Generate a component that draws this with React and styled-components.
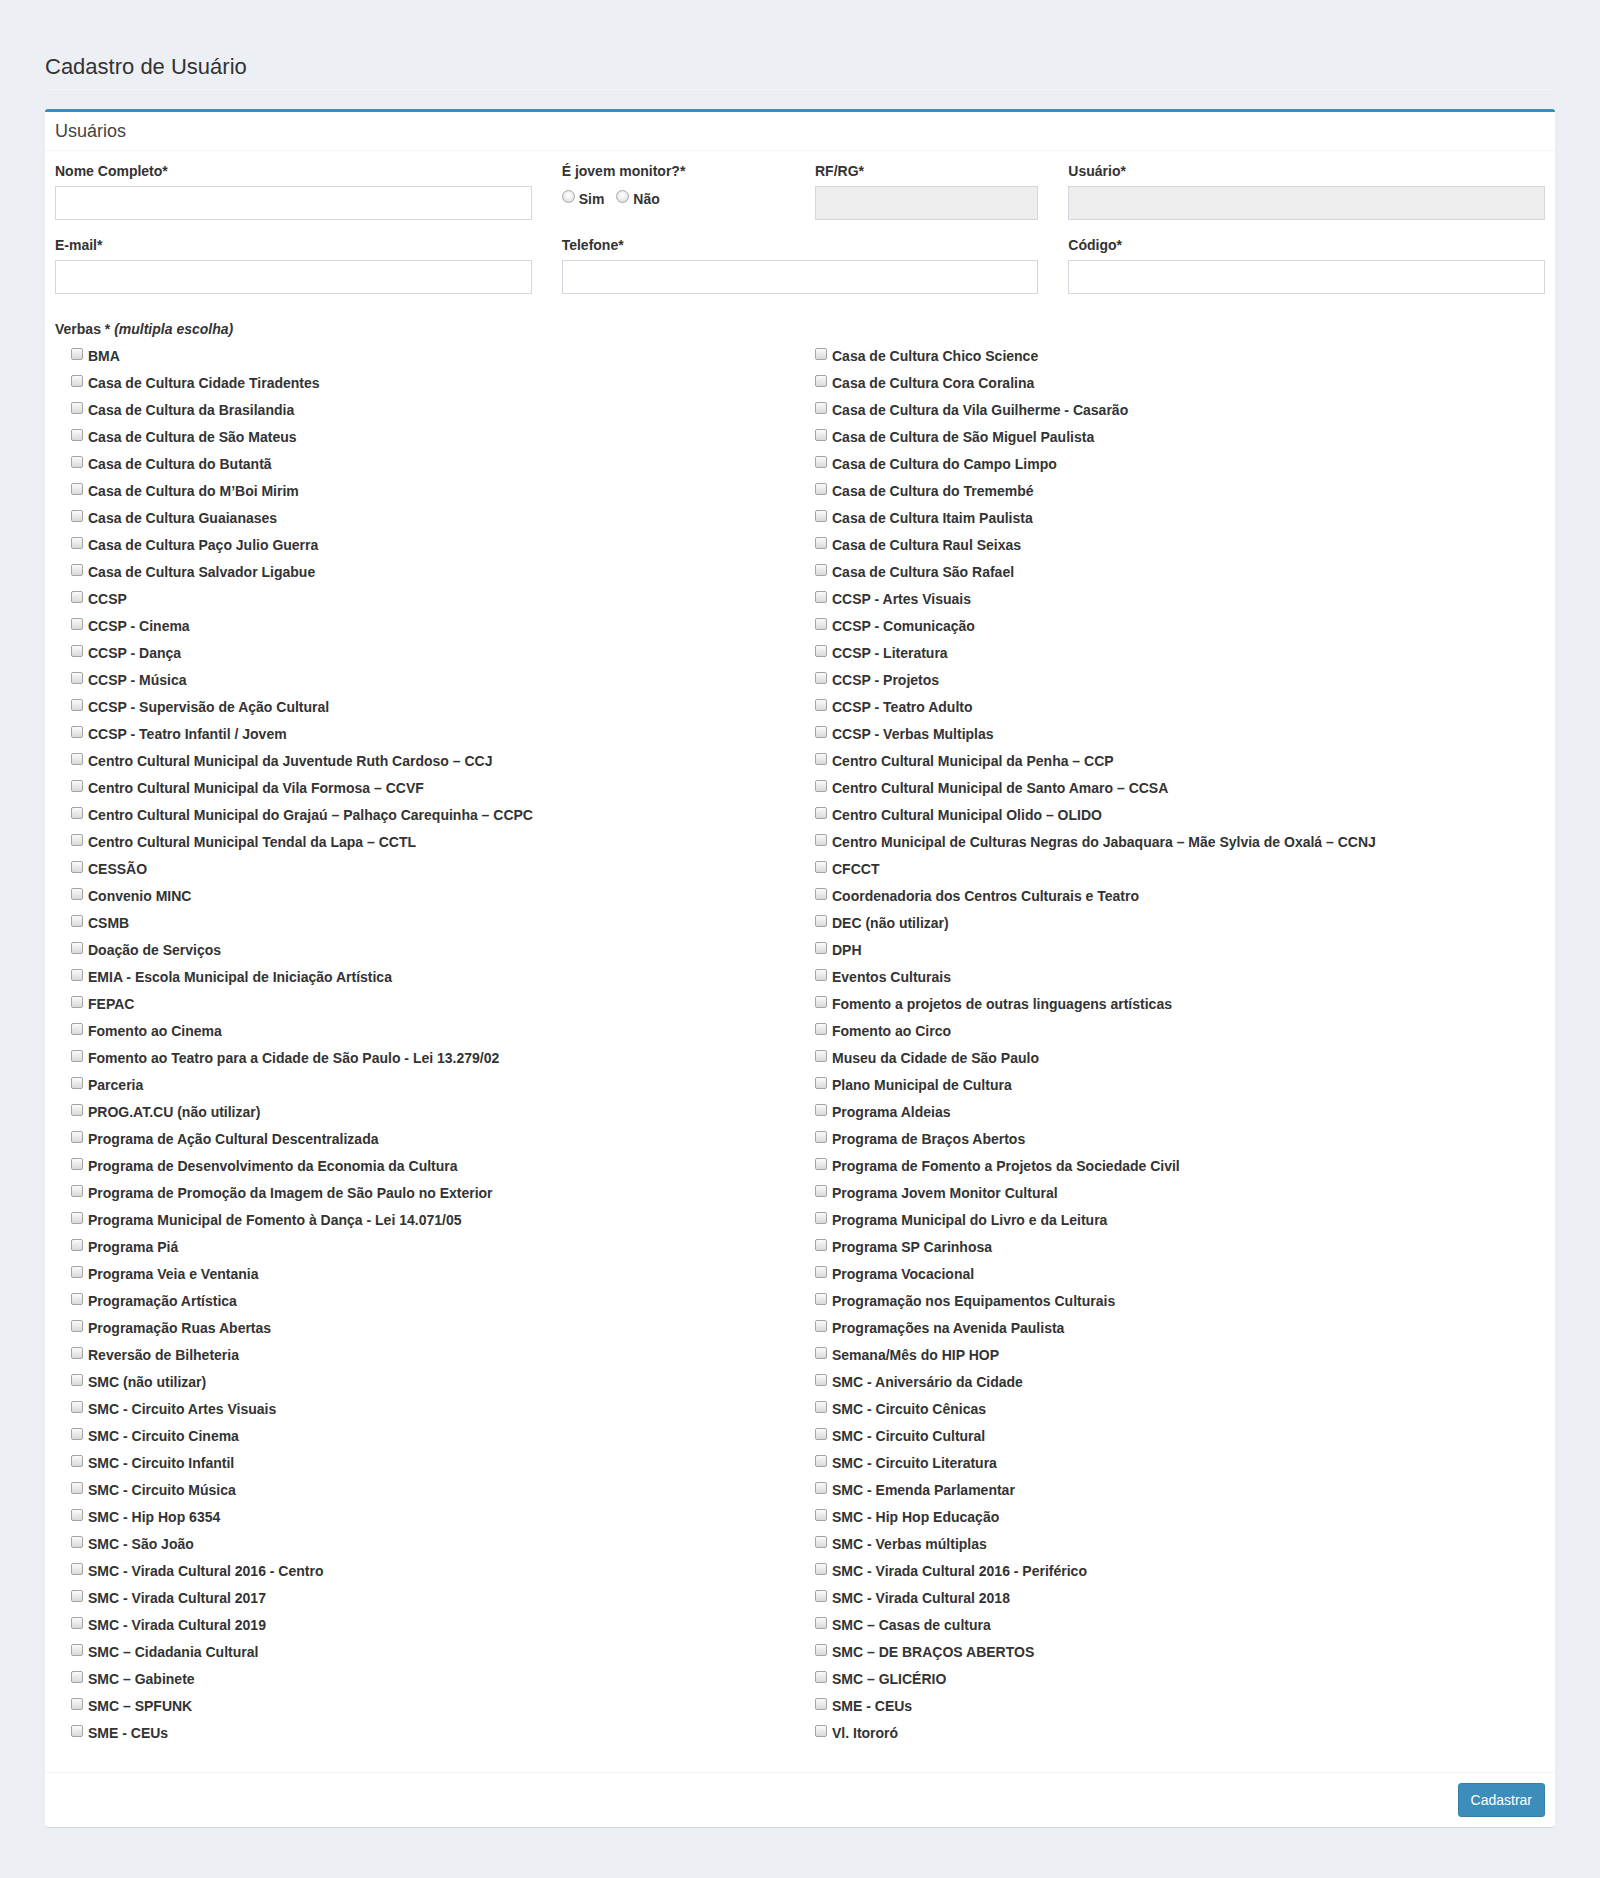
import React from "react";
import styled, { createGlobalStyle } from "styled-components";

const GlobalStyle = createGlobalStyle`
  html, body { margin: 0; padding: 0; }
  body {
    background: #ecf0f5;
    font-family: "Liberation Sans", Arial, Helvetica, sans-serif;
    font-size: 14px;
    line-height: 20px;
    color: #333;
  }
  * { box-sizing: border-box; }
`;

const Page = styled.div`
  padding: 55px 45px 50px;
  min-height: 1878px;
`;

const PageHeader = styled.div`
  padding-bottom: 10px;
  border-bottom: 1px solid #f3f5f8;
  margin-bottom: 19px;
`;

const Title = styled.h1`
  margin: 0;
  font-size: 22px;
  line-height: 24px;
  font-weight: 400;
  color: #333;
`;

const Box = styled.div`
  background: #fff;
  border-top: 3px solid #3c8dbc;
  border-radius: 3px;
  box-shadow: 0 1px 1px rgba(0, 0, 0, 0.1);
`;

const BoxHeader = styled.div`
  padding: 10px;
  border-bottom: 1px solid #f4f4f4;
`;

const BoxTitle = styled.h3`
  margin: 0;
  font-size: 18px;
  line-height: 18px;
  font-weight: 400;
  color: #444;
`;

const BoxBody = styled.div`
  padding: 10px;
`;

const Row = styled.div`
  display: flex;
  margin: 0 -15px;
`;

const Col = styled.div`
  width: ${(p) => (p.$span / 12) * 100}%;
  padding: 0 15px;
`;

const FormGroup = styled.div`
  margin-bottom: ${(p) => p.$mb ?? 15}px;
  margin-top: ${(p) => p.$mt ?? 0}px;
`;

const Label = styled.label`
  display: block;
  font-weight: 700;
  margin-bottom: 5px;
  line-height: 20px;
`;

const Hint = styled.em`
  font-style: italic;
`;

const Input = styled.input`
  display: block;
  width: 100%;
  height: 34px;
  border: 1px solid #d2d6de;
  border-radius: 0;
  background: ${(p) => (p.disabled ? "#eee" : "#fff")};
  padding: 6px 12px;
  font: inherit;
  outline: none;
`;

const RadioRow = styled.div`
  display: flex;
  gap: 12px;
  padding-top: 3px;
`;

const Choice = styled.label`
  display: inline-flex;
  align-items: flex-start;
  font-weight: 700;
  line-height: 20px;
  color: #333;
  gap: ${(p) => p.$gap}px;
`;

const RadioDot = styled.span`
  width: 13px;
  height: 13px;
  margin-top: 1px;
  border-radius: 50%;
  border: 1px solid #a8a8a8;
  background: radial-gradient(circle at 50% 40%, #ffffff 0%, #f1f1f1 40%, #d4d4d4 100%);
  flex: none;
`;

const CheckBox = styled.span`
  width: 12px;
  height: 12px;
  margin-top: 2px;
  border-radius: 2px;
  border: 1px solid #a4a4a4;
  background: linear-gradient(#fbfbfb, #d9d9d9);
  flex: none;
`;

const ItemList = styled.div`
  display: flex;
  flex-direction: column;
  gap: 7px;
  padding-left: ${(p) => p.$indent}px;
  padding-top: 2px;
`;

const BoxFooter = styled.div`
  display: flex;
  justify-content: flex-end;
  padding: 10px;
  border-top: 1px solid #f4f4f4;
`;

const Button = styled.button`
  background: #3c8dbc;
  border: 1px solid #367fa9;
  color: #fff;
  font-family: "Liberation Sans", Arial, sans-serif;
  font-size: 14px;
  line-height: 20px;
  padding: 6px 12px;
  border-radius: 3px;
  cursor: pointer;
`;

const left = [
  "BMA",
  "Casa de Cultura Cidade Tiradentes",
  "Casa de Cultura da Brasilandia",
  "Casa de Cultura de São Mateus",
  "Casa de Cultura do Butantã",
  "Casa de Cultura do M’Boi Mirim",
  "Casa de Cultura Guaianases",
  "Casa de Cultura Paço Julio Guerra",
  "Casa de Cultura Salvador Ligabue",
  "CCSP",
  "CCSP - Cinema",
  "CCSP - Dança",
  "CCSP - Música",
  "CCSP - Supervisão de Ação Cultural",
  "CCSP - Teatro Infantil / Jovem",
  "Centro Cultural Municipal da Juventude Ruth Cardoso – CCJ",
  "Centro Cultural Municipal da Vila Formosa – CCVF",
  "Centro Cultural Municipal do Grajaú – Palhaço Carequinha – CCPC",
  "Centro Cultural Municipal Tendal da Lapa – CCTL",
  "CESSÃO",
  "Convenio MINC",
  "CSMB",
  "Doação de Serviços",
  "EMIA - Escola Municipal de Iniciação Artística",
  "FEPAC",
  "Fomento ao Cinema",
  "Fomento ao Teatro para a Cidade de São Paulo - Lei 13.279/02",
  "Parceria",
  "PROG.AT.CU (não utilizar)",
  "Programa de Ação Cultural Descentralizada",
  "Programa de Desenvolvimento da Economia da Cultura",
  "Programa de Promoção da Imagem de São Paulo no Exterior",
  "Programa Municipal de Fomento à Dança - Lei 14.071/05",
  "Programa Piá",
  "Programa Veia e Ventania",
  "Programação Artística",
  "Programação Ruas Abertas",
  "Reversão de Bilheteria",
  "SMC (não utilizar)",
  "SMC - Circuito Artes Visuais",
  "SMC - Circuito Cinema",
  "SMC - Circuito Infantil",
  "SMC - Circuito Música",
  "SMC - Hip Hop 6354",
  "SMC - São João",
  "SMC - Virada Cultural 2016 - Centro",
  "SMC - Virada Cultural 2017",
  "SMC - Virada Cultural 2019",
  "SMC – Cidadania Cultural",
  "SMC – Gabinete",
  "SMC – SPFUNK",
  "SME - CEUs",
];

const right = [
  "Casa de Cultura Chico Science",
  "Casa de Cultura Cora Coralina",
  "Casa de Cultura da Vila Guilherme - Casarão",
  "Casa de Cultura de São Miguel Paulista",
  "Casa de Cultura do Campo Limpo",
  "Casa de Cultura do Tremembé",
  "Casa de Cultura Itaim Paulista",
  "Casa de Cultura Raul Seixas",
  "Casa de Cultura São Rafael",
  "CCSP - Artes Visuais",
  "CCSP - Comunicação",
  "CCSP - Literatura",
  "CCSP - Projetos",
  "CCSP - Teatro Adulto",
  "CCSP - Verbas Multiplas",
  "Centro Cultural Municipal da Penha – CCP",
  "Centro Cultural Municipal de Santo Amaro – CCSA",
  "Centro Cultural Municipal Olido – OLIDO",
  "Centro Municipal de Culturas Negras do Jabaquara – Mãe Sylvia de Oxalá – CCNJ",
  "CFCCT",
  "Coordenadoria dos Centros Culturais e Teatro",
  "DEC (não utilizar)",
  "DPH",
  "Eventos Culturais",
  "Fomento a projetos de outras linguagens artísticas",
  "Fomento ao Circo",
  "Museu da Cidade de São Paulo",
  "Plano Municipal de Cultura",
  "Programa Aldeias",
  "Programa de Braços Abertos",
  "Programa de Fomento a Projetos da Sociedade Civil",
  "Programa Jovem Monitor Cultural",
  "Programa Municipal do Livro e da Leitura",
  "Programa SP Carinhosa",
  "Programa Vocacional",
  "Programação nos Equipamentos Culturais",
  "Programações na Avenida Paulista",
  "Semana/Mês do HIP HOP",
  "SMC - Aniversário da Cidade",
  "SMC - Circuito Cênicas",
  "SMC - Circuito Cultural",
  "SMC - Circuito Literatura",
  "SMC - Emenda Parlamentar",
  "SMC - Hip Hop Educação",
  "SMC - Verbas múltiplas",
  "SMC - Virada Cultural 2016 - Periférico",
  "SMC - Virada Cultural 2018",
  "SMC – Casas de cultura",
  "SMC – DE BRAÇOS ABERTOS",
  "SMC – GLICÉRIO",
  "SME - CEUs",
  "Vl. Itororó",
];

function Field({ label, span, disabled }) {
  return (
    <Col $span={span}>
      <FormGroup>
        <Label>{label}</Label>
        <Input type="text" disabled={disabled} />
      </FormGroup>
    </Col>
  );
}

function CheckList({ items, indent }) {
  return (
    <ItemList $indent={indent}>
      {items.map((t) => (
        <Choice key={t} $gap={5}>
          <CheckBox />
          {t}
        </Choice>
      ))}
    </ItemList>
  );
}

export default function App() {
  return (
    <>
      <GlobalStyle />
      <Page>
        <PageHeader>
          <Title>Cadastro de Usuário</Title>
        </PageHeader>
        <Box>
          <BoxHeader>
            <BoxTitle>Usuários</BoxTitle>
          </BoxHeader>
          <BoxBody>
            <Row>
              <Field label="Nome Completo*" span={4} />
              <Col $span={2}>
                <FormGroup>
                  <Label>É jovem monitor?*</Label>
                  <RadioRow>
                    <Choice $gap={4}>
                      <RadioDot />
                      Sim
                    </Choice>
                    <Choice $gap={4}>
                      <RadioDot />
                      Não
                    </Choice>
                  </RadioRow>
                </FormGroup>
              </Col>
              <Field label="RF/RG*" span={2} disabled />
              <Field label="Usuário*" span={4} disabled />
            </Row>
            <Row>
              <Field label="E-mail*" span={4} />
              <Field label="Telefone*" span={4} />
              <Field label="Código*" span={4} />
            </Row>
            <FormGroup $mt={10} $mb={19}>
              <Label as="div">
                Verbas * <Hint>(multipla escolha)</Hint>
              </Label>
              <Row>
                <Col $span={6}>
                  <CheckList items={left} indent={16} />
                </Col>
                <Col $span={6}>
                  <CheckList items={right} indent={0} />
                </Col>
              </Row>
            </FormGroup>
          </BoxBody>
          <BoxFooter>
            <Button type="button">Cadastrar</Button>
          </BoxFooter>
        </Box>
      </Page>
    </>
  );
}
